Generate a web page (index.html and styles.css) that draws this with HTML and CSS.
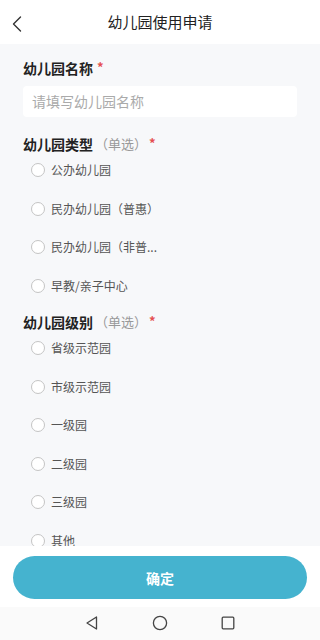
FILE: index.html
```html
<!DOCTYPE html>
<html lang="zh">
<head>
<meta charset="utf-8">
<link rel="stylesheet" href="styles.css">
</head>
<body>
<div class="app">
  <header class="topbar">
    <svg class="back" width="20" height="20" viewBox="0 0 20 20"><path d="M11.5 3 L4.5 10 L11.5 17" fill="none" stroke="#333" stroke-width="1.4" stroke-linecap="round" stroke-linejoin="round"/></svg>
    <div class="title">幼儿园使用申请</div>
  </header>
  <main class="content">
    <div class="label first">幼儿园名称<span class="req">*</span></div>
    <div class="input">请填写幼儿园名称</div>

    <div class="label second">幼儿园类型<span class="hint">（单选）</span><span class="req">*</span></div>
    <div class="options">
      <div class="opt"><span class="radio"></span><span class="otext">公办幼儿园</span></div>
      <div class="opt"><span class="radio"></span><span class="otext">民办幼儿园（普惠）</span></div>
      <div class="opt"><span class="radio"></span><span class="otext">民办幼儿园（非普...</span></div>
      <div class="opt"><span class="radio"></span><span class="otext">早教/亲子中心</span></div>
    </div>

    <div class="label third">幼儿园级别<span class="hint">（单选）</span><span class="req">*</span></div>
    <div class="options">
      <div class="opt"><span class="radio"></span><span class="otext">省级示范园</span></div>
      <div class="opt"><span class="radio"></span><span class="otext">市级示范园</span></div>
      <div class="opt"><span class="radio"></span><span class="otext">一级园</span></div>
      <div class="opt"><span class="radio"></span><span class="otext">二级园</span></div>
      <div class="opt"><span class="radio"></span><span class="otext">三级园</span></div>
      <div class="opt"><span class="radio"></span><span class="otext">其他</span></div>
    </div>
  </main>
  <footer class="footer">
    <button class="submit">确定</button>
  </footer>
  <nav class="navbar">
    <svg width="16" height="16" viewBox="0 0 16 16"><path d="M12.5 2 L3 8 L12.5 14 Z" fill="none" stroke="#444" stroke-width="1.3" stroke-linejoin="round"/></svg>
    <svg width="16" height="16" viewBox="0 0 16 16"><circle cx="8" cy="8" r="6.6" fill="none" stroke="#444" stroke-width="1.3"/></svg>
    <svg width="16" height="16" viewBox="0 0 16 16"><rect x="2.2" y="2.2" width="11.6" height="11.6" rx="1" fill="none" stroke="#444" stroke-width="1.3"/></svg>
  </nav>
</div>
</body>
</html>
```

FILE: styles.css
```css
* { box-sizing: border-box; }
html, body { margin: 0; padding: 0; }
body {
  font-family: "Noto Sans CJK SC", "Noto Sans", sans-serif;
  color: #333;
  background: #fff;
}
.app {
  width: 320px;
  height: 640px;
  display: flex;
  flex-direction: column;
  overflow: hidden;
}
.topbar {
  height: 44px;
  flex: none;
  background: #fff;
  display: flex;
  align-items: center;
  justify-content: center;
  position: relative;
}
.back {
  position: absolute;
  left: 9px;
  top: 14px;
}
.title {
  font-size: 15px;
  color: #222;
  line-height: 20px;
}
.content {
  flex: 1;
  min-height: 0;
  overflow: hidden;
  background: #f7f8fa;
  padding: 0 23px;
}
.label {
  font-size: 14px;
  font-weight: bold;
  color: #222;
  line-height: 20px;
  display: flex;
  align-items: center;
}
.label.first { margin-top: 14px; }
.label.second { margin-top: 17px; }
.label.third { margin-top: 4px; }
.hint {
  font-weight: normal;
  color: #999;
  font-size: 13px;
  margin-left: 2px;
}
.req {
  color: #e55050;
  font-size: 13px;
  margin-left: 2px;
  position: relative;
  top: -1px;
}
.label.first .req { margin-left: 4px; }
.input {
  margin-top: 8px;
  height: 31px;
  background: #fff;
  border-radius: 4px;
  padding-left: 9px;
  font-size: 14px;
  color: #aaa;
  line-height: 31px;
}
.options { display: flex; flex-direction: column; }
.opt {
  height: 38.5px;
  flex: none;
  padding-top: 8px;
  padding-left: 8px;
  display: flex;
  align-items: flex-start;
}
.radio {
  width: 14px;
  height: 14px;
  margin-top: 1px;
  border: 1px solid #c4c4c4;
  border-radius: 50%;
  background: #fff;
  flex: none;
}
.otext {
  margin-left: 6px;
  font-size: 12px;
  line-height: 16px;
  color: #555;
  white-space: nowrap;
}
.footer {
  height: 61px;
  flex: none;
  background: #fff;
  padding: 10px 13px 8px;
}
.submit {
  width: 100%;
  height: 43px;
  border: none;
  border-radius: 22px;
  background: #45b3cf;
  color: #fff;
  font-family: "Noto Sans CJK SC", "Noto Sans", sans-serif;
  font-size: 14px;
  font-weight: bold;
}
.navbar {
  height: 33px;
  flex: none;
  background: #fafafa;
  display: flex;
  justify-content: center;
  align-items: center;
  gap: 52px;
  padding-bottom: 1px;
}
```
